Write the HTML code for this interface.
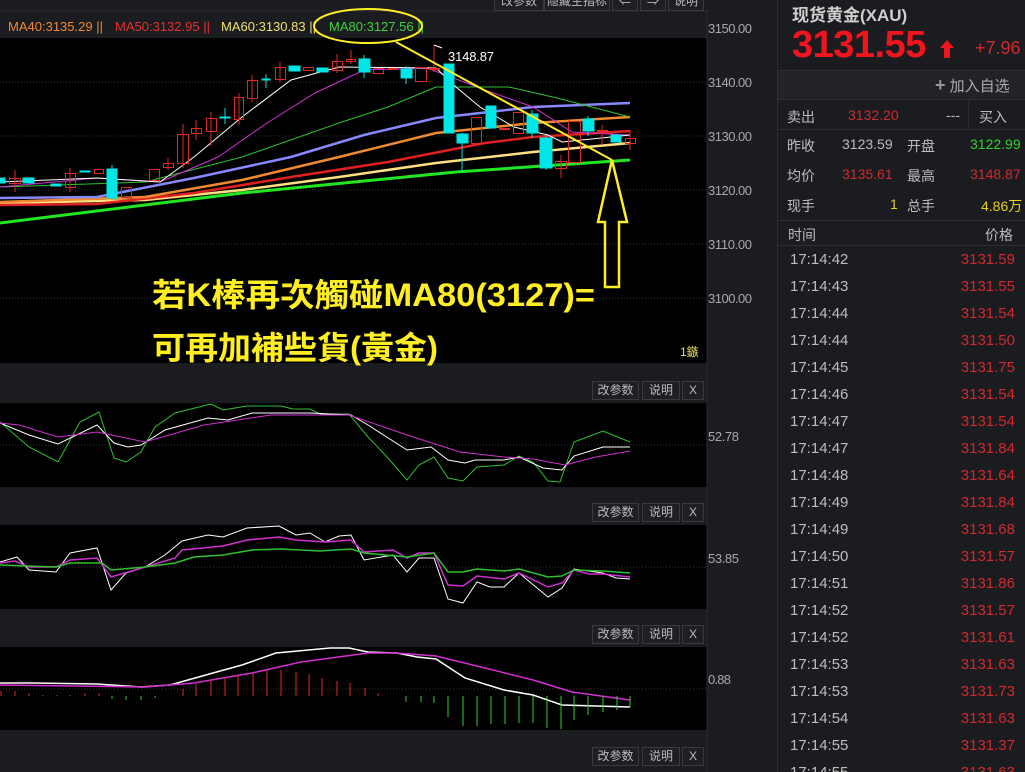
<!DOCTYPE html>
<html><head><meta charset="utf-8"><style>
*{margin:0;padding:0;box-sizing:border-box}
html,body{width:1025px;height:772px;overflow:hidden}
body{background:#1b1c20;position:relative;font-family:"Liberation Sans","Noto Sans CJK SC",sans-serif}
.a{position:absolute;white-space:nowrap}
.btn{position:absolute;height:19px;border:1px solid #3a3b40;background:#1e1f23;color:#bbb;font-size:12px;line-height:17px;text-align:center}
.rp{color:#bdbdbd;font-size:14px}
</style></head><body>
<svg class="a" style="left:0;top:0" width="777" height="772" font-family="Liberation Sans Narrow, Liberation Sans, sans-serif">
<rect x="0" y="38" width="707" height="325" fill="#000"/>
<rect x="0" y="403" width="707" height="84" fill="#000"/>
<rect x="0" y="525" width="707" height="84" fill="#000"/>
<rect x="0" y="647" width="707" height="83" fill="#000"/>
<line x1="0" y1="11" x2="707" y2="11" stroke="#2c2d31"/>
<line x1="707" y1="10" x2="707" y2="772" stroke="#2c2d31"/>
<g stroke="#333" stroke-dasharray="1,2">
<line x1="0" y1="82" x2="707" y2="82"/><line x1="0" y1="136" x2="707" y2="136"/><line x1="0" y1="190" x2="707" y2="190"/><line x1="0" y1="244" x2="707" y2="244"/><line x1="0" y1="298" x2="707" y2="298"/>
<line x1="0" y1="445" x2="707" y2="445"/><line x1="0" y1="567" x2="707" y2="567"/><line x1="0" y1="689" x2="707" y2="689"/>
</g>
<g fill="#a8a8a8" font-size="13">
<text x="708" y="33" textLength="44">3150.00</text><text x="708" y="87" textLength="44">3140.00</text><text x="708" y="141" textLength="44">3130.00</text><text x="708" y="195" textLength="44">3120.00</text><text x="708" y="249" textLength="44">3110.00</text><text x="708" y="303" textLength="44">3100.00</text>
<text x="708" y="441" textLength="31">52.78</text><text x="708" y="563" textLength="31">53.85</text><text x="708" y="684" textLength="23">0.88</text>
</g>
<text x="680" y="356" fill="#f0e060" font-size="12">1鏃</text>
<g font-size="13">
<text x="8" y="31" fill="#f08a30" textLength="95">MA40:3135.29 ||</text>
<text x="115" y="31" fill="#e63030" textLength="95">MA50:3132.95 ||</text>
<text x="221" y="31" fill="#f0e070" textLength="95">MA60:3130.83 ||</text>
<text x="329" y="31" fill="#40d040" textLength="95">MA80:3127.56 ||</text>
</g>
<g fill="none">
<polyline stroke="#22e622" stroke-width="3" points="0,223 145,205 242,193 456,172 630,160"/>
<polyline stroke="#ffe080" stroke-width="2.5" points="0,203 145,200 242,190 339,177 436,163 533,152 630,143"/>
<polyline stroke="#e02020" stroke-width="2.5" points="0,205 97,204 194,193 291,177 388,162 485,143 533,137 630,131"/>
<polyline stroke="#f08a30" stroke-width="2.5" points="0,202 145,197 242,180 339,157 436,133 533,123 630,117"/>
<polyline stroke="#8888ff" stroke-width="2.5" points="0,198 97,197 194,178 291,157 364,135 436,118 533,107 630,103"/>
<polyline stroke="#30c030" stroke-width="1" points="0,187 145,182 242,157 339,123 388,107 436,87 509,87 557,98 630,117"/>
<polyline stroke="#d030d0" stroke-width="1" points="0,187 97,178 160,182 218,157 267,123 315,93 364,70 427,68 485,90 533,107 572,132 630,135"/>
<polyline stroke="#fff" stroke-width="1" points="0,182 97,178 160,182 194,157 242,117 291,80 339,67 436,68 456,87 480,107 514,127 548,135 562,142 611,137 630,135"/>
</g>
<g stroke-width="1">
<g fill="#00e5e5" stroke="#00e5e5">
<rect x="0" y="178" width="5" height="5"/><rect x="23" y="178" width="11" height="5"/><rect x="51" y="184" width="10" height="2"/><rect x="80" y="171" width="10" height="1"/>
<line x1="112" y1="165" x2="112" y2="200"/><rect x="107" y="169" width="10" height="29"/><rect x="220" y="117" width="10" height="1"/><line x1="225" y1="108" x2="225" y2="124"/>
<rect x="262" y="79" width="8" height="1"/><line x1="266" y1="74" x2="266" y2="88"/><rect x="289" y="66" width="11" height="5"/><rect x="317" y="68" width="11" height="4"/>
<line x1="364" y1="55" x2="364" y2="78"/><rect x="359" y="59" width="11" height="13"/><line x1="406" y1="66" x2="406" y2="84"/><rect x="401" y="69" width="11" height="9"/>
<rect x="444" y="64" width="10" height="69"/><line x1="462" y1="133" x2="462" y2="172"/><rect x="457" y="134" width="11" height="9"/>
<rect x="486" y="106" width="10" height="22"/><line x1="532" y1="110" x2="532" y2="138"/><rect x="527" y="114" width="11" height="19"/>
<line x1="546" y1="135" x2="546" y2="170"/><rect x="540" y="138" width="12" height="30"/><line x1="588" y1="116" x2="588" y2="136"/><rect x="583" y="119" width="11" height="12"/><rect x="611" y="135" width="10" height="7"/>
</g>
<g fill="none" stroke="#e02828">
<rect x="9.5" y="178.5" width="11" height="5"/><line x1="15" y1="170" x2="15" y2="192"/><rect x="65.5" y="173.5" width="10" height="14"/><line x1="70" y1="168" x2="70" y2="192"/><rect x="94.5" y="169.5" width="9" height="4"/>
<rect x="121.5" y="187.5" width="10" height="10"/><rect x="149.5" y="169.5" width="10" height="11"/><rect x="163.5" y="163.5" width="10" height="4"/><line x1="168" y1="158" x2="168" y2="170"/>
<rect x="177.5" y="134.5" width="11" height="29"/><line x1="183" y1="124" x2="183" y2="168"/><rect x="191.5" y="128.5" width="10" height="5"/><line x1="196" y1="120" x2="196" y2="140"/>
<rect x="206.5" y="118.5" width="10" height="13"/><line x1="211" y1="112" x2="211" y2="146"/><rect x="234.5" y="97.5" width="9" height="22"/><line x1="239" y1="93" x2="239" y2="125"/>
<rect x="247.5" y="80.5" width="10" height="18"/><line x1="252" y1="75" x2="252" y2="102"/><rect x="275.5" y="67.5" width="10" height="12"/><line x1="280" y1="62" x2="280" y2="82"/>
<rect x="303.5" y="67.5" width="10" height="3"/><rect x="332.5" y="61.5" width="10" height="9"/><line x1="337" y1="54" x2="337" y2="73"/><rect x="346.5" y="59.5" width="9" height="2"/><line x1="351" y1="50" x2="351" y2="64"/>
<rect x="373.5" y="68.5" width="10" height="5"/><rect x="388.5" y="68.5" width="9" height="1"/><rect x="415.5" y="67.5" width="11" height="14"/><rect x="429.5" y="68.5" width="10" height="1"/><line x1="434" y1="45" x2="434" y2="72"/>
<rect x="471.5" y="117.5" width="10" height="26"/><rect x="499.5" y="128.5" width="10" height="1"/><rect x="513.5" y="112.5" width="10" height="21"/>
<rect x="555.5" y="161.5" width="11" height="7"/><line x1="561" y1="155" x2="561" y2="178"/><rect x="568.5" y="121.5" width="12" height="41"/><rect x="597.5" y="130.5" width="10" height="1"/><line x1="602" y1="125" x2="602" y2="145"/>
<rect x="625.5" y="138.5" width="10" height="5"/><line x1="630" y1="130" x2="630" y2="150"/>
</g>
</g>
<polyline points="434,45 442,48" stroke="#fff" fill="none"/>
<text x="448" y="61" fill="#fff" font-size="13" textLength="46">3148.87</text>
<ellipse cx="368" cy="26" rx="54" ry="17" fill="none" stroke="#ffee22" stroke-width="2"/>
<line x1="396" y1="42" x2="612" y2="160" stroke="#ffee22" stroke-width="2"/>
<polygon points="612,160 627,222 619,222 619,287 605,287 605,222 598,222" fill="none" stroke="#ffee22" stroke-width="2.5"/>
<text x="152" y="306" fill="#ffee22" font-size="32" font-family="Liberation Sans, Noto Sans CJK TC, sans-serif" font-weight="bold" textLength="443" lengthAdjust="spacingAndGlyphs">若K棒再次觸碰MA80(3127)=</text>
<text x="152" y="359" fill="#ffee22" font-size="32" font-family="Liberation Sans, Noto Sans CJK TC, sans-serif" font-weight="bold" textLength="286" lengthAdjust="spacingAndGlyphs">可再加補些貨(黃金)</text>
<g fill="none" stroke-width="1">
<polyline stroke="#30c030" points="0,422 29,447 58,462 80,422 99,412 114,458 126,462 141,452 155,427 175,413 211,404 223,410 247,406 281,406 293,409 310,409 320,414 349,414 368,437 388,458 407,480 419,465 434,457 448,478 463,481 477,467 504,465 519,456 533,462 548,481 560,482 574,442 603,431 630,442"/>
<polyline stroke="#fff" points="0,423 29,435 58,444 97,425 114,443 128,447 141,445 165,430 208,418 228,420 252,413 276,413 310,413 351,415 368,425 407,450 431,447 448,460 465,463 475,460 504,460 519,457 543,468 562,470 574,456 603,447 630,447"/>
<polyline stroke="#d030d0" points="0,423 19,425 58,437 97,432 145,442 204,425 271,415 349,415 407,435 460,452 504,457 533,459 565,465 596,457 630,451"/>
<polyline stroke="#fff" points="0,562 17,557 29,570 56,572 70,553 97,548 111,590 126,573 145,567 165,555 182,541 208,535 223,537 247,528 279,526 296,535 310,533 325,542 339,536 351,535 364,560 393,555 407,572 419,558 434,558 448,599 463,603 477,582 490,587 504,587 519,573 548,597 562,588 574,569 603,573 616,578 630,579"/>
<polyline stroke="#d030d0" stroke-width="1.5" points="0,563 15,561 29,567 56,567 70,560 97,558 111,577 145,567 175,558 182,550 223,546 247,540 279,537 296,540 325,542 351,540 364,552 393,550 407,558 419,553 434,553 448,585 463,586 477,576 504,579 519,573 548,587 562,583 574,570 589,574 603,574 630,577"/>
<polyline stroke="#30c030" stroke-width="1.5" points="0,565 56,567 70,563 102,563 111,570 145,567 175,563 194,557 223,555 252,550 281,549 320,551 351,549 364,553 407,557 434,553 448,572 463,572 477,569 504,571 519,569 548,577 562,576 574,570 603,571 630,573"/>
<polyline stroke="#fff" stroke-width="1.5" points="0,683 34,683 97,684 141,687 170,685 213,673 242,665 276,653 330,648 349,648 368,652 397,653 417,657 436,659 465,678 504,690 533,695 562,705 630,707"/>
<polyline stroke="#d030d0" stroke-width="1.5" points="0,685 145,687 194,683 252,673 301,662 368,653 397,653 436,656 485,668 533,680 572,692 630,700"/>
</g>
<g stroke="#e02828">
<line x1="1" y1="696" x2="1" y2="691"/><line x1="15" y1="696" x2="15" y2="691"/><line x1="29" y1="696" x2="29" y2="693"/><line x1="43" y1="696" x2="43" y2="695"/><line x1="57" y1="696" x2="57" y2="695"/><line x1="70" y1="696" x2="70" y2="695"/><line x1="85" y1="696" x2="85" y2="693"/><line x1="99" y1="696" x2="99" y2="693"/>
<line x1="183" y1="696" x2="183" y2="689"/><line x1="196" y1="696" x2="196" y2="684"/><line x1="211" y1="696" x2="211" y2="680"/><line x1="225" y1="696" x2="225" y2="677"/><line x1="238" y1="696" x2="238" y2="675"/><line x1="253" y1="696" x2="253" y2="673"/><line x1="267" y1="696" x2="267" y2="670"/><line x1="281" y1="696" x2="281" y2="670"/><line x1="296" y1="696" x2="296" y2="672"/><line x1="309" y1="696" x2="309" y2="674"/><line x1="322" y1="696" x2="322" y2="678"/><line x1="337" y1="696" x2="337" y2="681"/><line x1="350" y1="696" x2="350" y2="683"/><line x1="365" y1="696" x2="365" y2="688"/><line x1="378" y1="696" x2="378" y2="693"/>
</g>
<g stroke="#30d030">
<line x1="112" y1="696" x2="112" y2="699"/><line x1="126" y1="696" x2="126" y2="700"/><line x1="141" y1="696" x2="141" y2="700"/><line x1="155" y1="696" x2="155" y2="698"/>
<line x1="406" y1="696" x2="406" y2="702"/><line x1="421" y1="696" x2="421" y2="702"/><line x1="434" y1="696" x2="434" y2="703"/><line x1="448" y1="696" x2="448" y2="717"/><line x1="463" y1="696" x2="463" y2="726"/><line x1="477" y1="696" x2="477" y2="726"/><line x1="491" y1="696" x2="491" y2="724"/><line x1="505" y1="696" x2="505" y2="724"/><line x1="519" y1="696" x2="519" y2="723"/><line x1="533" y1="696" x2="533" y2="723"/><line x1="547" y1="696" x2="547" y2="728"/><line x1="561" y1="696" x2="561" y2="729"/><line x1="574" y1="696" x2="574" y2="720"/><line x1="588" y1="696" x2="588" y2="715"/><line x1="603" y1="696" x2="603" y2="712"/><line x1="617" y1="696" x2="617" y2="710"/><line x1="630" y1="696" x2="630" y2="708"/>
</g>
</svg>
<div class="btn" style="left:494px;top:-8px;width:50px">改参数</div>
<div class="btn" style="left:544px;top:-8px;width:66px">隐藏主指标</div>
<div class="btn" style="left:612px;top:-8px;width:26px">⇐</div>
<div class="btn" style="left:640px;top:-8px;width:26px">⇒</div>
<div class="btn" style="left:668px;top:-8px;width:36px">说明</div>
<div class="btn" style="left:592px;top:381px;width:47px">改参数</div><div class="btn" style="left:642px;top:381px;width:38px">说明</div><div class="btn" style="left:682px;top:381px;width:22px">X</div>
<div class="btn" style="left:592px;top:503px;width:47px">改参数</div><div class="btn" style="left:642px;top:503px;width:38px">说明</div><div class="btn" style="left:682px;top:503px;width:22px">X</div>
<div class="btn" style="left:592px;top:625px;width:47px">改参数</div><div class="btn" style="left:642px;top:625px;width:38px">说明</div><div class="btn" style="left:682px;top:625px;width:22px">X</div>
<div class="btn" style="left:592px;top:747px;width:47px">改参数</div><div class="btn" style="left:642px;top:747px;width:38px">说明</div><div class="btn" style="left:682px;top:747px;width:22px">X</div>
<div class="a" style="left:777px;top:0;width:1px;height:772px;background:#2e2f33"></div>
<div class="a" style="left:792px;top:1px;color:#cfcfcf;font-size:17px;font-weight:bold">现货黄金(XAU)</div>
<div class="a" style="left:792px;top:24px;color:#f0141e;font-size:38px;font-weight:bold;letter-spacing:-0.5px">3131.55</div>
<svg class="a" style="left:940px;top:40px" width="14" height="18"><polygon points="7,0 14,8 10,8 10,18 4,18 4,8 0,8" fill="#f0141e"/></svg>
<div class="a" style="left:975px;top:38px;color:#d02a30;font-size:18px">+7.96</div>
<div class="a" style="left:778px;top:70px;width:247px;height:30px;background:#222327;border-top:1px solid #2e2f33;border-bottom:1px solid #2e2f33"></div>
<div class="a" style="left:935px;top:75px;color:#aaa;font-size:15px"><b style="font-size:18px;color:#999">+</b> 加入自选</div>
<div class="a rp" style="left:787px;top:107px">卖出</div>
<div class="a" style="left:848px;top:107px;color:#d02a30;font-size:14px">3132.20</div>
<div class="a rp" style="left:946px;top:107px">---</div>
<div class="a" style="left:968px;top:101px;width:1px;height:28px;background:#2e2f33"></div>
<div class="a rp" style="left:979px;top:107px">买入</div>
<div class="a" style="left:778px;top:129px;width:247px;height:1px;background:#2e2f33"></div>
<div class="a rp" style="left:787px;top:136px">昨收</div><div class="a rp" style="left:842px;top:136px">3123.59</div><div class="a rp" style="left:907px;top:136px">开盘</div><div class="a" style="left:970px;top:136px;color:#2ed02e;font-size:14px">3122.99</div>
<div class="a rp" style="left:787px;top:166px">均价</div><div class="a" style="left:842px;top:166px;color:#d02a30;font-size:14px">3135.61</div><div class="a rp" style="left:907px;top:166px">最高</div><div class="a" style="left:970px;top:166px;color:#d02a30;font-size:14px">3148.87</div>
<div class="a rp" style="left:787px;top:196px">现手</div><div class="a" style="left:890px;top:196px;color:#e6d020;font-size:14px">1</div><div class="a rp" style="left:907px;top:196px">总手</div><div class="a" style="left:981px;top:196px;color:#e6d020;font-size:14px">4.86万</div>
<div class="a" style="left:778px;top:220px;width:247px;height:1px;background:#2e2f33"></div>
<div class="a rp" style="left:788px;top:225px">时间</div><div class="a rp" style="left:985px;top:225px">价格</div>
<div class="a" style="left:778px;top:245px;width:247px;height:1px;background:#2e2f33"></div>
<div class="a" style="left:790px;top:246px;width:225px;font-size:15px;line-height:27px;color:#bdbdbd">
<div>17:14:42<span style="float:right;color:#d02a30">3131.59</span></div>
<div>17:14:43<span style="float:right;color:#d02a30">3131.55</span></div>
<div>17:14:44<span style="float:right;color:#d02a30">3131.54</span></div>
<div>17:14:44<span style="float:right;color:#d02a30">3131.50</span></div>
<div>17:14:45<span style="float:right;color:#d02a30">3131.75</span></div>
<div>17:14:46<span style="float:right;color:#d02a30">3131.54</span></div>
<div>17:14:47<span style="float:right;color:#d02a30">3131.54</span></div>
<div>17:14:47<span style="float:right;color:#d02a30">3131.84</span></div>
<div>17:14:48<span style="float:right;color:#d02a30">3131.64</span></div>
<div>17:14:49<span style="float:right;color:#d02a30">3131.84</span></div>
<div>17:14:49<span style="float:right;color:#d02a30">3131.68</span></div>
<div>17:14:50<span style="float:right;color:#d02a30">3131.57</span></div>
<div>17:14:51<span style="float:right;color:#d02a30">3131.86</span></div>
<div>17:14:52<span style="float:right;color:#d02a30">3131.57</span></div>
<div>17:14:52<span style="float:right;color:#d02a30">3131.61</span></div>
<div>17:14:53<span style="float:right;color:#d02a30">3131.63</span></div>
<div>17:14:53<span style="float:right;color:#d02a30">3131.73</span></div>
<div>17:14:54<span style="float:right;color:#d02a30">3131.63</span></div>
<div>17:14:55<span style="float:right;color:#d02a30">3131.37</span></div>
<div>17:14:55<span style="float:right;color:#d02a30">3131.63</span></div>
</div>
</body></html>
